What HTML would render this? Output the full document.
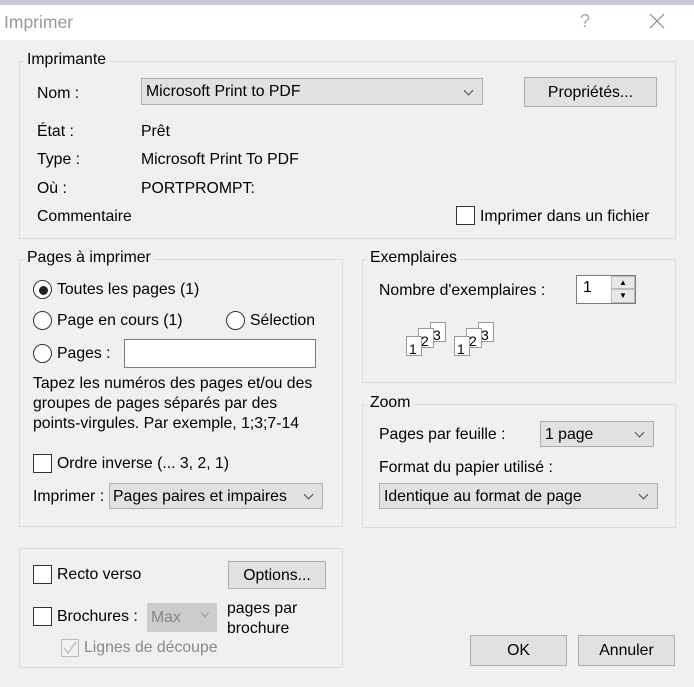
<!DOCTYPE html>
<html><head><meta charset="utf-8"><style>
*{margin:0;padding:0;box-sizing:border-box}
body{width:694px;height:687px;background:#f0f0f0;font-family:"Liberation Sans",sans-serif;font-size:15.8px;color:#000;position:relative;overflow:hidden}
.a{position:absolute;white-space:nowrap}
.g{position:absolute;border:1px solid #dcdcdc}
.gt{position:absolute;background:#f0f0f0;padding:0 3px;top:-11px;left:5px}
.btn{position:absolute;background:#e1e1e1;border:1px solid #adadad;text-align:center}
.sel{position:absolute;background:#e1e1e1;border:1px solid #adadad;padding-left:4px}
.sel:after{content:"";position:absolute;right:10px;top:50%;width:6px;height:6px;border-right:1px solid #444;border-bottom:1px solid #444;transform:translateY(-70%) rotate(45deg)}
.cb{position:absolute;width:19px;height:19px;border:1px solid #333;background:#fff}
.rb{position:absolute;width:19px;height:19px;border:1px solid #333;border-radius:50%;background:#fff}
.pg{position:absolute;width:16px;height:20px;background:#fff;border:1px solid #999;font-size:14px;line-height:24px;padding-left:2px}
</style></head><body>
<div class="a" style="left:0;top:0;width:694px;height:5px;background:#c8ccd2"></div>
<div class="a" style="left:0;top:5px;width:694px;height:35px;background:#fff"></div>
<div class="a" style="left:4px;top:12px;font-size:17.5px;color:#999">Imprimer</div>
<div class="a" style="left:580px;top:11px;font-size:18px;color:#aaa">?</div>
<svg class="a" style="left:649px;top:13px" width="16" height="16"><path d="M1 1L15 15M15 1L1 15" stroke="#888" stroke-width="1.2"/></svg>

<div class="g" style="left:19px;top:61px;width:657px;height:178px"><div class="gt" style="left:4px">Imprimante</div></div>
<div class="a" style="left:37px;top:85px">Nom :</div>
<div class="sel" style="left:141px;top:78px;width:342px;height:27px;line-height:26px">Microsoft Print to PDF</div>
<div class="btn" style="left:524px;top:77px;width:133px;height:30px;line-height:29px">Propriétés...</div>
<div class="a" style="left:37px;top:123px">État :</div><div class="a" style="left:141px;top:123px">Prêt</div>
<div class="a" style="left:37px;top:151px">Type :</div><div class="a" style="left:141px;top:151px">Microsoft Print To PDF</div>
<div class="a" style="left:37px;top:180px">Où :</div><div class="a" style="left:141px;top:180px">PORTPROMPT:</div>
<div class="a" style="left:37px;top:208px">Commentaire</div>
<div class="cb" style="left:456px;top:206px"></div><div class="a" style="left:480px;top:208px">Imprimer dans un fichier</div>

<div class="g" style="left:19px;top:259px;width:324px;height:268px"><div class="gt" style="left:4px">Pages à imprimer</div></div>
<div class="rb" style="left:33px;top:280px"></div><div class="a" style="left:39px;top:286px;width:9px;height:9px;border-radius:50%;background:#222"></div>
<div class="a" style="left:57px;top:281px">Toutes les pages (1)</div>
<div class="rb" style="left:33px;top:311px"></div><div class="a" style="left:57px;top:312px">Page en cours (1)</div>
<div class="rb" style="left:226px;top:311px"></div><div class="a" style="left:250px;top:312px">Sélection</div>
<div class="rb" style="left:33px;top:344px"></div><div class="a" style="left:57px;top:345px">Pages :</div>
<div class="a" style="left:124px;top:339px;width:192px;height:29px;background:#fff;border:1px solid #7a7a7a"></div>
<div class="a" style="left:33px;top:374px;line-height:20px">Tapez les numéros des pages et/ou des<br>groupes de pages séparés par des<br>points-virgules. Par exemple, 1;3;7-14</div>
<div class="cb" style="left:33px;top:454px"></div><div class="a" style="left:57px;top:455px">Ordre inverse (... 3, 2, 1)</div>
<div class="a" style="left:33px;top:488px">Imprimer :</div>
<div class="sel" style="left:109px;top:483px;width:214px;height:26px;line-height:25px;padding-left:3px">Pages paires et impaires</div>

<div class="g" style="left:362px;top:259px;width:314px;height:124px"><div class="gt" style="left:4px">Exemplaires</div></div>
<div class="a" style="left:379px;top:282px">Nombre d'exemplaires :</div>
<div class="a" style="left:576px;top:275px;width:60px;height:29px;background:#fff;border:1px solid #7a7a7a;padding:3px 6px">1</div>
<div class="a" style="left:611px;top:276px;width:24px;height:13px;background:#e8e8e8;border:1px solid #bbb;font-size:8px;text-align:center;line-height:11px">▲</div>
<div class="a" style="left:611px;top:289px;width:24px;height:14px;background:#e8e8e8;border:1px solid #bbb;font-size:8px;text-align:center;line-height:12px">▼</div>
<div class="pg" style="left:430px;top:322px">3</div><div class="pg" style="left:418px;top:328px">2</div><div class="pg" style="left:406px;top:336px">1</div>
<div class="pg" style="left:478px;top:322px">3</div><div class="pg" style="left:466px;top:328px">2</div><div class="pg" style="left:454px;top:336px">1</div>

<div class="g" style="left:362px;top:404px;width:314px;height:124px"><div class="gt" style="left:4px">Zoom</div></div>
<div class="a" style="left:379px;top:426px">Pages par feuille :</div>
<div class="sel" style="left:540px;top:421px;width:114px;height:26px;line-height:25px">1 page</div>
<div class="a" style="left:379px;top:459px">Format du papier utilisé :</div>
<div class="sel" style="left:379px;top:483px;width:279px;height:26px;line-height:25px">Identique au format de page</div>

<div class="g" style="left:19px;top:548px;width:324px;height:120px"></div>
<div class="cb" style="left:33px;top:565px"></div><div class="a" style="left:57px;top:566px">Recto verso</div>
<div class="btn" style="left:228px;top:561px;width:98px;height:28px;line-height:27px">Options...</div>
<div class="cb" style="left:33px;top:607px"></div><div class="a" style="left:57px;top:608px">Brochures :</div>
<div class="a" style="left:147px;top:603px;width:70px;height:29px;background:#ccc;border:1px solid #ccc;color:#888;padding:5px 3px">Max<span style="position:absolute;right:8px;top:6px;width:6px;height:6px;border-right:1px solid #999;border-bottom:1px solid #999;transform:rotate(45deg)"></span></div>
<div class="a" style="left:227px;top:599px;line-height:20px">pages par<br>brochure</div>
<div class="a" style="left:61px;top:639px;width:18px;height:18px;border:1px solid #bbb"></div>
<svg class="a" style="left:62px;top:641px" width="16" height="14"><path d="M2 7L6 12L14 1" stroke="#bbb" fill="none" stroke-width="1.3"/></svg>
<div class="a" style="left:84px;top:639px;color:#888">Lignes de découpe</div>

<div class="btn" style="left:470px;top:635px;width:97px;height:31px;line-height:30px">OK</div>
<div class="btn" style="left:578px;top:635px;width:97px;height:31px;line-height:30px">Annuler</div>
</body></html>
